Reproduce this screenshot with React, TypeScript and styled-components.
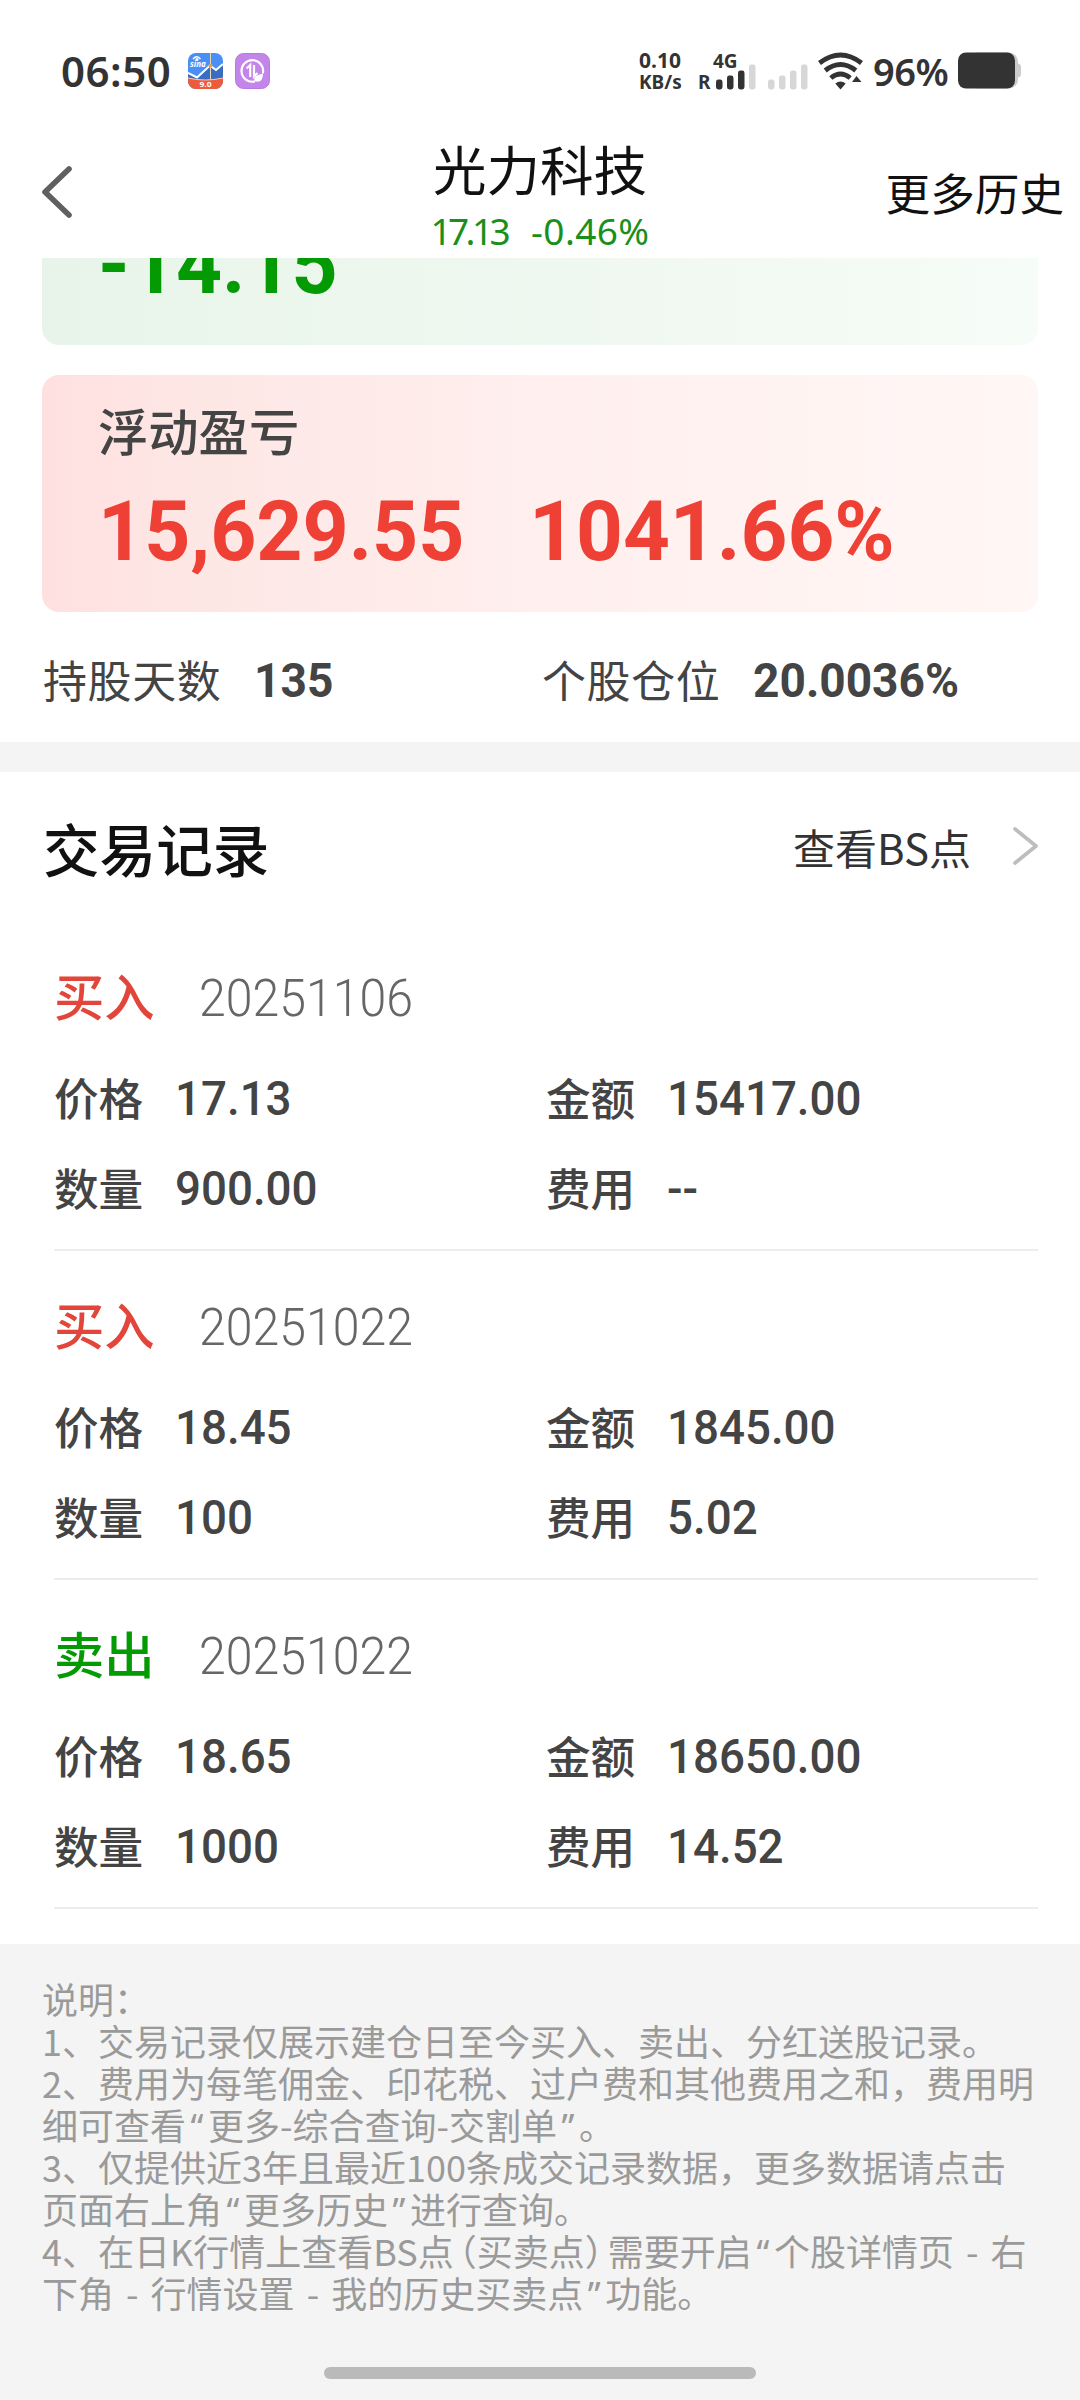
import React from "react";
import styled, { createGlobalStyle } from "styled-components";

const CJK = `"Noto Sans CJK SC", sans-serif`;
const UI = `"Noto Sans", "Noto Sans CJK SC", sans-serif`;
const DIN = `Roboto, "Noto Sans CJK SC", sans-serif`;

const RED = "#ee4035";
const GREEN = "#049a04";

const GlobalStyle = createGlobalStyle`
  * { box-sizing: border-box; }
  html, body { margin: 0; padding: 0; background: #fff; }
`;

const Screen = styled.div`
  width: 1080px;
  height: 2400px;
  display: flex;
  flex-direction: column;
  overflow: hidden;
  background: #fff;
  font-family: ${CJK};
  color: #444;
  white-space: nowrap;
`;

/* ---------- status bar ---------- */

const StatusBar = styled.div`
  height: 96px;
  flex: none;
  padding: 45px 58px 0 61px;
  display: flex;
  align-items: center;
  justify-content: space-between;
  font-family: ${UI};
  color: #333;
`;

const StatusGroup = styled.div`
  display: flex;
  align-items: center;
`;

const Clock = styled.span`
  width: 127px;
  font-size: 42px;
  line-height: 50px;
  font-weight: 600;
  letter-spacing: 0.5px;
`;

const AppIcon = styled.svg`
  width: 35px;
  height: 36px;
  margin-right: 12px;
`;

const NetSpeed = styled.div`
  display: flex;
  flex-direction: column;
  width: 59px;
  font-weight: 700;
  font-size: 21px;
  line-height: 22px;
`;

const SpeedUnit = styled.span`
  font-size: 19px;
  font-weight: 700;
`;

const Carrier = styled.div<{ $gap: number }>`
  position: relative;
  display: flex;
  align-items: flex-end;
  height: 39px;
  margin-right: ${(p) => p.$gap}px;
`;

const Roaming = styled.span`
  width: 18px;
  font-size: 19px;
  line-height: 25px;
  height: 20px;
  font-weight: 700;
`;

const NetworkType = styled.span`
  position: absolute;
  left: 15px;
  top: -2px;
  font-size: 19px;
  line-height: 24px;
  font-weight: 700;
`;

const BatteryText = styled.span`
  width: 85px;
  margin-left: 9px;
  font-size: 38px;
  line-height: 50px;
  font-weight: 600;
  letter-spacing: -0.5px;
`;

/* ---------- navigation header ---------- */

const NavBar = styled.header`
  height: 162px;
  flex: none;
  display: grid;
  grid-template-columns: 1fr auto 1fr;
  padding: 0 16px 0 41px;
  color: #111;
`;

const BackIcon = styled.svg`
  width: 32px;
  height: 54px;
  margin-top: 69px;
`;

const TitleBlock = styled.div`
  display: flex;
  flex-direction: column;
  align-items: center;
  gap: 13px;
  padding-top: 42px;
  margin-right: 25px;
`;

const StockName = styled.div`
  font-size: 53.5px;
  line-height: 60px;
`;

const StockQuote = styled.div`
  display: flex;
  gap: 24px;
  font-family: ${UI};
  font-size: 37px;
  line-height: 40px;
  color: #1a8f1a;
`;

const LastPrice = styled.span`
  letter-spacing: -3.6px;
`;

const ChangeRate = styled.span`
  letter-spacing: 0.4px;
`;

const MoreHistory = styled.div`
  justify-self: end;
  margin-top: 71px;
  font-size: 44.6px;
  line-height: 50px;
`;

/* ---------- summary ---------- */

const Summary = styled.section`
  display: flex;
  flex-direction: column;
  padding: 0 42px;
`;

const RealizedCard = styled.div`
  height: 87px;
  margin-bottom: 30px;
  padding: 0 56px 38px;
  display: flex;
  align-items: flex-end;
  overflow: hidden;
  border-radius: 0 0 17px 17px;
  background: linear-gradient(90deg, #e8f4e9, #f6fcf7);
`;

const FloatingCard = styled.div`
  height: 237px;
  padding: 24px 56px;
  border-radius: 17px;
  background: linear-gradient(90deg, #ffe0e0, #fde7e5 15%, #fff1f0 60%, #fff7f5);
`;

const CardLabel = styled.div`
  font-size: 50.3px;
  line-height: 60px;
  font-weight: 500;
  margin-bottom: 31px;
`;

const FigureRow = styled.div`
  display: grid;
  grid-template-columns: 431px 1fr;
`;

const Figure = styled.span<{ $color: string; $stretch?: number }>`
  font-family: ${DIN};
  font-size: 84px;
  line-height: 84px;
  font-weight: 700;
  color: ${(p) => p.$color};
  transform: scaleX(${(p) => p.$stretch ?? 0.958});
  transform-origin: left;
`;

const StatRow = styled.div`
  height: 130px;
  padding-top: 3px;
  display: grid;
  grid-template-columns: 499px 1fr;
  align-items: center;
`;

const Stat = styled.div`
  display: flex;
  align-items: center;
`;

const StatLabel = styled.span`
  width: 212px;
  padding-left: 1px;
  font-size: 44px;
  line-height: 50px;
  letter-spacing: 0.6px;
`;

const StatValue = styled.span`
  font-family: ${DIN};
  font-size: 48px;
  line-height: 50px;
  margin-top: 4px;
  font-weight: 700;
  transform: scaleX(0.96);
  transform-origin: left;
`;

const Band = styled.div`
  height: 30px;
  flex: none;
  background: #f4f4f4;
`;

/* ---------- records ---------- */

const SectionHeader = styled.div`
  height: 150px;
  flex: none;
  padding: 0 42px 0 43px;
  display: flex;
  align-items: center;
  justify-content: space-between;
`;

const SectionTitle = styled.h2`
  margin: 0;
  font-size: 56.6px;
  line-height: 70px;
  font-weight: 500;
  color: #111;
`;

const ViewLink = styled.div`
  display: flex;
  align-items: center;
  gap: 41px;
  font-size: 42px;
  line-height: 50px;
  color: #333;
`;

const ChevronIcon = styled.svg`
  width: 26px;
  height: 40px;
  margin-bottom: 3px;
`;

const RecordList = styled.div`
  padding: 0 42px 35px 54px;
`;

const Record = styled.article`
  height: 329px;
  padding-top: 42px;
  border-bottom: 2px solid #ededed;
`;

const RecordHead = styled.div`
  display: flex;
  align-items: center;
  height: 60px;
  margin-bottom: 43px;
`;

const Side = styled.span<{ $buy: boolean }>`
  width: 145px;
  font-size: 50.3px;
  line-height: 60px;
  font-weight: 500;
  color: ${(p) => (p.$buy ? "#e2463a" : GREEN)};
`;

const TradeDate = styled.span`
  margin-top: 10px;
  font-family: ${DIN};
  font-size: 52px;
  line-height: 60px;
  font-weight: 350;
  color: #666;
  transform: scaleX(0.927);
  transform-origin: left;
`;

const FieldGrid = styled.div`
  display: grid;
  grid-template-columns: 492px 1fr;
  row-gap: 30px;
`;

const Field = styled.div`
  display: flex;
  height: 60px;
  align-items: center;
`;

const FieldLabel = styled.span`
  width: 121px;
  font-size: 44.6px;
  line-height: 60px;
  font-weight: 500;
`;

const FieldValue = styled.span`
  font-family: ${DIN};
  font-size: 48px;
  line-height: 60px;
  margin-top: 3px;
  font-weight: 550;
  transform: scaleX(0.952);
  transform-origin: left;
`;

/* ---------- notes ---------- */

const Notes = styled.footer`
  flex: 1;
  display: flex;
  flex-direction: column;
  padding: 33px 42px 21px;
  background: #f4f4f4;
  color: #9a9a9a;
  font-size: 36px;
  line-height: 42px;
  word-spacing: 4px;
`;

const Quote = styled.span`
  display: inline-block;
  width: 22px;
  text-align: center;
  font-family: "Noto Sans", sans-serif;
  line-height: 1;
`;

const Paren = styled.span<{ $open?: boolean }>`
  font-feature-settings: "halt";
  ${(p) => (p.$open ? "margin-left: 5px;" : "margin-right: 5px;")}
`;

const HomeIndicator = styled.div`
  width: 432px;
  height: 12px;
  margin: auto auto 0;
  border-radius: 6px;
  background: #bababa;
`;

const SinaFinanceIcon = () => (
  <AppIcon viewBox="0 0 35 36">
    <defs>
      <clipPath id="sina-clip">
        <rect width="35" height="36" rx="8" />
      </clipPath>
    </defs>
    <g clipPath="url(#sina-clip)">
      <rect width="35" height="36" fill="#4a8ff5" />
      <path d="M0 21 L9 25 L22 13 L28 18 L35 12 V30 H0Z" fill="#3a6cc0" />
      <path d="M0 20 L9 24.5 L22 12.5 L28 17 L35 11" fill="none" stroke="#fff" strokeWidth="2" />
      <path d="M22.5 0 V27" stroke="#e8d9b8" strokeWidth="1" />
      <circle cx="22.5" cy="12.5" r="2" fill="#e8a23c" />
      <path d="M0 25 Q17 29 35 25 V36 H0Z" fill="#ee5a3c" />
      <path d="M0 25 Q17 29 35 25" fill="none" stroke="#f6c9bb" strokeWidth="1" />
      <path d="M5 6 Q9 1.5 12.5 6" fill="none" stroke="#fff" strokeWidth="1.4" />
      <circle cx="9" cy="6.6" r="1.5" fill="#fff" />
      <text x="2" y="13.5" fontFamily="Noto Sans" fontStyle="italic" fontWeight="700" fontSize="8" fill="#fff">sina</text>
      <text x="17.5" y="34" textAnchor="middle" textLength="12" lengthAdjust="spacingAndGlyphs" fontFamily="Noto Sans" fontWeight="700" fontSize="7" fill="#fff">9.0</text>
    </g>
  </AppIcon>
);

const TransferIcon = () => (
  <AppIcon viewBox="0 0 35 36">
    <rect x="0.5" y="0.5" width="34" height="35" rx="8" fill="#c385ea" stroke="#b67bdc" />
    <path d="M28 19.5 A10.8 10.8 0 1 0 19 28.6" fill="none" stroke="#fff" strokeWidth="2.2" strokeLinecap="round" />
    <path d="M11.6 15.5 L15.2 12 V24" fill="none" stroke="#fff" strokeWidth="2.2" />
    <path d="M19 12 V23.5 L22.4 20" fill="none" stroke="#fff" strokeWidth="2.2" />
    <path d="M19.5 28 C18.5 22.5 22.5 22 28 20.5 C28 26.5 25 30.5 19.5 28Z" fill="#fff" />
  </AppIcon>
);

const BAR_HEIGHTS = [10, 14, 19, 25];

const SignalBars = ({ level }: { level: number }) => (
  <svg width="40" height="26" viewBox="0 0 40 26">
    {BAR_HEIGHTS.map((h, i) => (
      <rect key={h} x={i * 11} y={25.5 - h} width="6.5" height={h} rx="2.4" fill={i < level ? "#333" : "#d7d7d7"} />
    ))}
  </svg>
);

const WifiIcon = () => (
  <svg width="46" height="38" viewBox="0 0 46 38">
    <g fill="none" stroke="#333" strokeWidth="4.8">
      <path d="M1.5 11 Q22.5 -5 43.5 11" />
      <path d="M7.2 18.5 Q22.5 6.5 37.8 18.5" />
      <path d="M12.8 26 Q22.5 18 32.2 26" />
    </g>
    <path d="M17.3 31.5 Q22.5 27.5 27.7 31.5 L22.5 37.5Z" fill="#333" />
    <path d="M34 30 L38.5 24 L43.5 30Z" fill="#333" />
  </svg>
);

const BatteryIcon = () => (
  <svg width="64" height="37" viewBox="0 0 64 37">
    <path d="M58 11.5 H60 Q63 12 63 15 V22 Q63 25 60 25.5 H58Z" fill="#ccc" />
    <rect x="10" y="0.5" width="50" height="36" rx="9" fill="#ccc" />
    <rect x="0" y="0.5" width="57" height="36" rx="8" fill="#333" />
  </svg>
);

type Trade = {
  buy: boolean;
  date: string;
  price: string;
  amount: string;
  quantity: string;
  fee: string;
};

const TRADES: Trade[] = [
  { buy: true, date: "20251106", price: "17.13", amount: "15417.00", quantity: "900.00", fee: "--" },
  { buy: true, date: "20251022", price: "18.45", amount: "1845.00", quantity: "100", fee: "5.02" },
  { buy: false, date: "20251022", price: "18.65", amount: "18650.00", quantity: "1000", fee: "14.52" },
];

const LabeledValue = ({ label, value }: { label: string; value: string }) => (
  <Field>
    <FieldLabel>{label}</FieldLabel>
    <FieldValue>{value}</FieldValue>
  </Field>
);

const TradeRecord = ({ trade }: { trade: Trade }) => (
  <Record>
    <RecordHead>
      <Side $buy={trade.buy}>{trade.buy ? "买入" : "卖出"}</Side>
      <TradeDate>{trade.date}</TradeDate>
    </RecordHead>
    <FieldGrid>
      <LabeledValue label="价格" value={trade.price} />
      <LabeledValue label="金额" value={trade.amount} />
      <LabeledValue label="数量" value={trade.quantity} />
      <LabeledValue label="费用" value={trade.fee} />
    </FieldGrid>
  </Record>
);

export default function App() {
  return (
    <>
      <GlobalStyle />
      <Screen lang="zh-CN">
        <StatusBar>
          <StatusGroup>
            <Clock>06:50</Clock>
            <SinaFinanceIcon />
            <TransferIcon />
          </StatusGroup>
          <StatusGroup>
            <NetSpeed>
              <span>0.10</span>
              <SpeedUnit>KB/s</SpeedUnit>
            </NetSpeed>
            <Carrier $gap={12}>
              <NetworkType>4G</NetworkType>
              <Roaming>R</Roaming>
              <SignalBars level={3} />
            </Carrier>
            <Carrier $gap={10}>
              <SignalBars level={0} />
            </Carrier>
            <WifiIcon />
            <BatteryText>96%</BatteryText>
            <BatteryIcon />
          </StatusGroup>
        </StatusBar>

        <NavBar>
          <BackIcon viewBox="0 0 32 54">
            <path d="M28 4 L4 27 L28 50" fill="none" stroke="#606060" strokeWidth="5.6" strokeLinecap="round" strokeLinejoin="round" />
          </BackIcon>
          <TitleBlock>
            <StockName>光力科技</StockName>
            <StockQuote>
              <LastPrice>17.13</LastPrice>
              <ChangeRate>-0.46%</ChangeRate>
            </StockQuote>
          </TitleBlock>
          <MoreHistory>更多历史</MoreHistory>
        </NavBar>

        <Summary>
          <RealizedCard>
            <Figure $color={GREEN}>-14.15</Figure>
          </RealizedCard>
          <FloatingCard>
            <CardLabel>浮动盈亏</CardLabel>
            <FigureRow>
              <Figure $color={RED}>15,629.55</Figure>
              <Figure $color={RED} $stretch={0.974}>1041.66%</Figure>
            </FigureRow>
          </FloatingCard>
          <StatRow>
            <Stat>
              <StatLabel>持股天数</StatLabel>
              <StatValue>135</StatValue>
            </Stat>
            <Stat>
              <StatLabel>个股仓位</StatLabel>
              <StatValue>20.0036%</StatValue>
            </Stat>
          </StatRow>
        </Summary>

        <Band />

        <SectionHeader>
          <SectionTitle>交易记录</SectionTitle>
          <ViewLink>
            查看BS点
            <ChevronIcon viewBox="0 0 26 40">
              <path d="M3 3 L24 20 L3 37" fill="none" stroke="#bdbdbd" strokeWidth="3.6" strokeLinecap="round" strokeLinejoin="round" />
            </ChevronIcon>
          </ViewLink>
        </SectionHeader>

        <RecordList>
          {TRADES.map((trade, i) => (
            <TradeRecord key={i} trade={trade} />
          ))}
        </RecordList>

        <Notes>
          <div>说明：</div>
          <div>1、交易记录仅展示建仓日至今买入、卖出、分红送股记录。</div>
          <div>2、费用为每笔佣金、印花税、过户费和其他费用之和，费用明</div>
          <div>
            细可查看<Quote>“</Quote>更多-综合查询-交割单<Quote>”</Quote>。
          </div>
          <div>3、仅提供近3年且最近100条成交记录数据，更多数据请点击</div>
          <div>
            页面右上角<Quote>“</Quote>更多历史<Quote>”</Quote>进行查询。
          </div>
          <div>
            4、在日K行情上查看BS点<Paren $open>（</Paren>买卖点<Paren>）</Paren>需要开启<Quote>“</Quote>个股详情页 - 右
          </div>
          <div>
            下角 - 行情设置 - 我的历史买卖点<Quote>”</Quote>功能。
          </div>
          <HomeIndicator />
        </Notes>
      </Screen>
    </>
  );
}
